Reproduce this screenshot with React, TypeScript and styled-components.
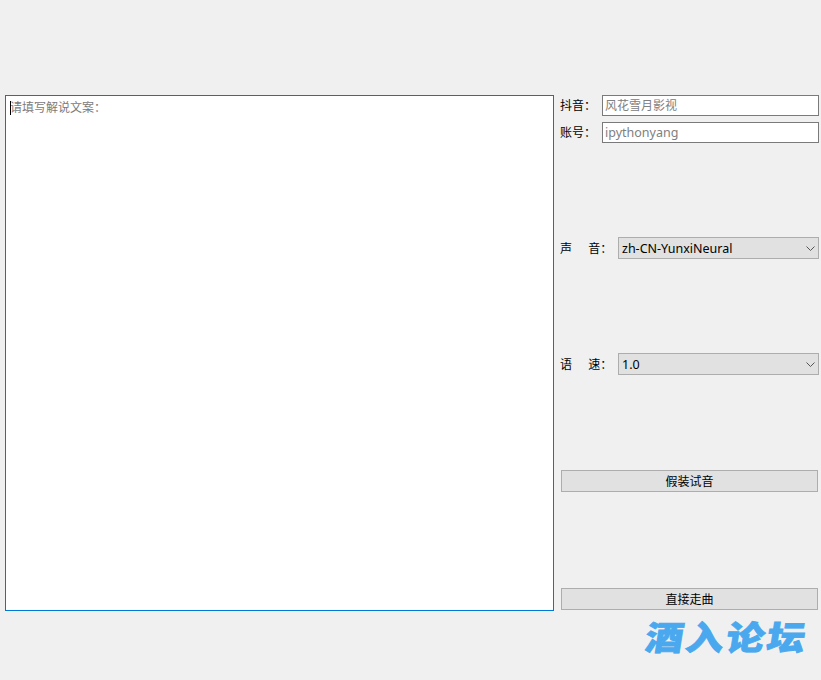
import React from "react";
import styled, { createGlobalStyle } from "styled-components";

const Global = createGlobalStyle`
  html, body { margin: 0; padding: 0; background: #f0f0f0; }
  body { width: 821px; height: 680px; overflow: hidden; font-family: "Noto Sans", "Noto Sans CJK SC", sans-serif; }
  * { box-sizing: border-box; }
`;

const Page = styled.div`
  width: 821px;
  height: 680px;
  background: #f0f0f0;
  padding: 95px 2px 0 5px;
  display: flex;
  flex-direction: column;
`;

const Main = styled.div`
  display: flex;
  gap: 6px;
  height: 516px;
`;

const EditorWrap = styled.div`
  position: relative;
  width: 549px;
  height: 516px;
`;

const Editor = styled.textarea`
  display: block;
  width: 100%;
  height: 100%;
  resize: none;
  outline: none;
  margin: 0;
  border: 1px solid #0078d7;
  border-radius: 0;
  background: #fff;
  padding: 2px 4px;
  font-family: "Noto Sans CJK SC", sans-serif;
  font-size: 12px;
  line-height: 17px;
  &::placeholder { color: #7b7b7b; opacity: 1; }
`;

const Caret = styled.span`
  position: absolute;
  left: 5px;
  top: 6px;
  width: 1px;
  height: 14px;
  background: #000;
`;

const Side = styled.div`
  width: 259px;
  display: flex;
  flex-direction: column;
`;

const Row = styled.div<{ $top: number }>`
  display: flex;
  align-items: center;
  margin-top: ${(p) => p.$top}px;
`;

const Label = styled.label<{ $width: number }>`
  flex: 0 0 ${(p) => p.$width}px;
  padding-bottom: 2px;
  font-family: "Noto Sans CJK SC", sans-serif;
  font-size: 12px;
  color: #000;
  white-space: pre;
`;

const TextInput = styled.input<{ $size: number }>`
  width: 217px;
  height: 21px;
  border: 1px solid #7a7a7a;
  border-radius: 0;
  background: #fff;
  outline: none;
  margin: 0;
  padding: 0 2px 1px 2px;
  font-family: "Noto Sans", "Noto Sans CJK SC", sans-serif;
  font-size: ${(p) => p.$size}px;
  &::placeholder { color: #808080; opacity: 1; }
`;

const SelectBox = styled.div`
  position: relative;
  width: 201px;
  height: 22px;
`;

const Select = styled.select`
  appearance: none;
  display: block;
  width: 100%;
  height: 100%;
  border: 1px solid #adadad;
  border-radius: 0;
  background: #e1e1e1;
  color: #000;
  outline: none;
  margin: 0;
  padding: 1px 0 0 3px;
  font-family: "Noto Sans", sans-serif;
  font-size: 12.5px;
`;

const Chevron = styled.svg`
  position: absolute;
  right: 4px;
  top: 9px;
  width: 9px;
  height: 5px;
  pointer-events: none;
`;

const ActionButton = styled.button<{ $top: number }>`
  width: 257px;
  height: 22px;
  margin: ${(p) => p.$top}px 0 0 1px;
  padding: 0;
  border: 1px solid #adadad;
  border-radius: 0;
  background: #e1e1e1;
  color: #000;
  font-family: "Noto Sans CJK SC", sans-serif;
  font-size: 12px;
  line-height: 20px;
`;

const Footer = styled.div`
  display: flex;
  justify-content: flex-end;
  padding-right: 11px;
  margin-top: 3px;
`;

const Logo = styled.div`
  font-family: "Noto Sans CJK SC", sans-serif;
  font-weight: 900;
  font-size: 38px;
  line-height: 44px;
  letter-spacing: 2.5px;
  color: #4aa8ee;
  -webkit-text-stroke: 1px #4aa8ee;
  transform: skewX(-9deg) scaleY(0.88);
  white-space: nowrap;
`;

const Arrow = () => (
  <Chevron viewBox="0 0 9 5" fill="none">
    <path d="M0.5 0.5 L4.5 4.5 L8.5 0.5" stroke="#555" strokeWidth="1" />
  </Chevron>
);

export default function App() {
  return (
    <Page>
      <Global />
      <Main>
        <EditorWrap>
          <Editor placeholder="请填写解说文案：" />
          <Caret />
        </EditorWrap>
        <Side>
          <Row $top={0}>
            <Label $width={42}>抖音：</Label>
            <TextInput $size={12} placeholder="风花雪月影视" />
          </Row>
          <Row $top={6}>
            <Label $width={42}>账号：</Label>
            <TextInput $size={12.5} placeholder="ipythonyang" />
          </Row>
          <Row $top={94}>
            <Label $width={58}>声{"      "}音：</Label>
            <SelectBox>
              <Select defaultValue="zh-CN-YunxiNeural">
                <option>zh-CN-YunxiNeural</option>
              </Select>
              <Arrow />
            </SelectBox>
          </Row>
          <Row $top={94}>
            <Label $width={58}>语{"      "}速：</Label>
            <SelectBox>
              <Select defaultValue="1.0">
                <option>1.0</option>
              </Select>
              <Arrow />
            </SelectBox>
          </Row>
          <ActionButton $top={95}>假装试音</ActionButton>
          <ActionButton $top={96}>直接走曲</ActionButton>
        </Side>
      </Main>
      <Footer>
        <Logo>酒入论坛</Logo>
      </Footer>
    </Page>
  );
}
